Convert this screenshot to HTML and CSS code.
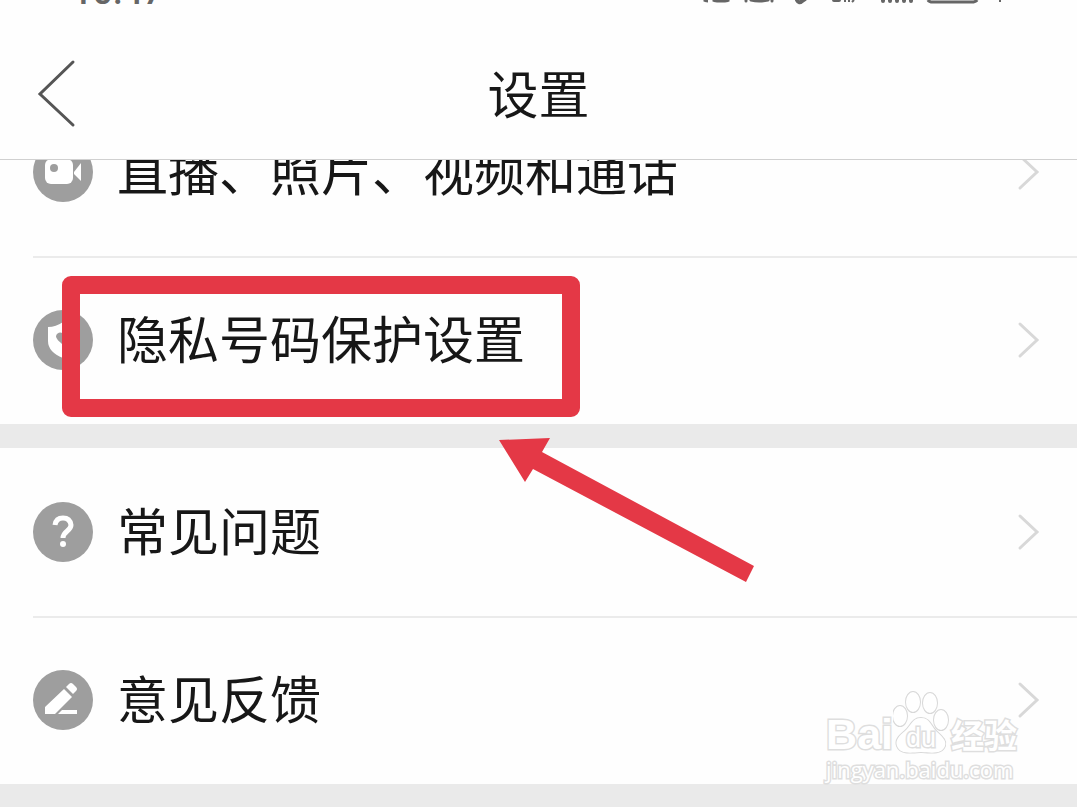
FILE: index.html
```html
<!DOCTYPE html>
<html lang="zh-CN">
<head>
    <meta charset="UTF-8">
    <meta name="viewport" content="width=device-width, initial-scale=1.0">
    <title>设置</title>
    <link rel="stylesheet" href="styles.css">
</head>
<body>
    <header class="top">
        <div class="status-bar">
            <span class="time">10:47</span>
            <svg class="status-icons" width="310" height="6" viewBox="0 0 310 6" fill="none" stroke="#666" stroke-width="3" aria-hidden="true">
                <path d="M4 0q1 1 4 1M13 0q1 1 4 1h8q3 0 4-1" />
                <path d="M46 0v1M51 0q8 2 17 0M72 0v1" stroke-linecap="round" />
                <path d="M97 0q2 4 5 1l3-2M134 0h5" stroke-width="4" stroke-linecap="round" />
                <path d="M145 0v2M149 0v2M154 0l-2 2" stroke-width="2" />
                <path d="M183 0v1M190 0v1M197 0v1M204 0v1M211 0v1" stroke-width="4" stroke-linecap="round" />
                <path d="M228 0q1 2 5 2h38q5 0 6-2" />
                <path d="M300 0v2" stroke-width="2" />
            </svg>
        </div>
        <div class="nav">
            <a href="#" class="back" aria-label="返回">
                <svg width="40" height="70" viewBox="0 0 40 70" fill="none" stroke="#555" stroke-width="3" stroke-linecap="round">
                    <path d="M36 4L3 36l33 31" />
                </svg>
            </a>
            <h1>设置</h1>
        </div>
    </header>

    <main class="settings">
        <div class="group scrolled">
            <a href="#" class="row">
                <svg class="icon" viewBox="0 0 60 60">
                    <circle cx="30" cy="30" r="30" fill="#9e9e9e" />
                    <rect x="12" y="17" width="28" height="25" rx="6" fill="#fff" />
                    <path d="M41 30l7-9v18l-7-7z" fill="#fff" />
                    <circle cx="21" cy="26" r="4" fill="#9e9e9e" />
                </svg>
                <span class="label">直播、照片、视频和通话</span>
                <svg class="arrow" viewBox="0 0 24 38"><path d="M3 3l17 16L3 35" /></svg>
            </a>
            <a href="#" class="row">
                <svg class="icon" viewBox="0 0 60 60">
                    <circle cx="30" cy="30" r="30" fill="#9e9e9e" />
                    <path d="M30 12q7 5 15 5v14q0 11-15 17-15-6-15-17V17q8 0 15-5z" fill="#fff" />
                    <path d="M30 35c-4-4-7-6-7-9a4 4 0 0 1 7-2 4 4 0 0 1 7 2c0 3-3 5-7 9z" fill="#9e9e9e" />
                </svg>
                <span class="label">隐私号码保护设置</span>
                <svg class="arrow" viewBox="0 0 24 38"><path d="M3 3l17 16L3 35" /></svg>
            </a>
        </div>
        <div class="group">
            <a href="#" class="row">
                <svg class="icon" viewBox="0 0 60 60">
                    <circle cx="30" cy="30" r="30" fill="#9e9e9e" />
                    <path d="M22 23q1-7 8-7t8 7c0 6-8 6-8 13" fill="none" stroke="#fff" stroke-width="5" />
                    <circle cx="30" cy="42" r="3" fill="#fff" />
                </svg>
                <span class="label">常见问题</span>
                <svg class="arrow" viewBox="0 0 24 38"><path d="M3 3l17 16L3 35" /></svg>
            </a>
            <a href="#" class="row">
                <svg class="icon" viewBox="0 0 60 60">
                    <circle cx="30" cy="30" r="30" fill="#9e9e9e" />
                    <path d="M31 19l8 8-17 17H12v-7zM29 40h15v4H25z" fill="#fff" />
                    <path d="M36 14q2-2 4 0l3 3q2 2 0 4l-3 3-7-7z" fill="#fff" />
                </svg>
                <span class="label">意见反馈</span>
                <svg class="arrow" viewBox="0 0 24 38"><path d="M3 3l17 16L3 35" /></svg>
            </a>
        </div>
    </main>

    <!-- highlight over the privacy row -->
    <div class="highlight"></div>
    <svg class="pointer" width="256" height="146" viewBox="0 0 256 146">
        <path d="M1 3l51-2-8 14 212 114-8 16L35 32l-8 13z" fill="#e43846" />
    </svg>

    <div class="watermark">
        <div class="brand">
            <span class="bai">Bai</span>
            <span class="paw">
                <svg width="58" height="66" viewBox="0 0 58 66" fill="#fff" stroke="#d8d8d8" stroke-width="2">
                    <ellipse cx="7" cy="26" rx="7" ry="10" />
                    <ellipse cx="20" cy="12" rx="7" ry="10" />
                    <ellipse cx="37" cy="13" rx="7" ry="10" />
                    <ellipse cx="48" cy="30" rx="7" ry="10" />
                    <path d="M28 28c-9 0-10 8-16 13S2 50 4 56c3 8 12 7 24 6 12 1 21 2 24-6 2-6-4-10-9-15S37 28 28 28z" />
                </svg>
                <span class="du">du</span>
            </span>
            <span class="jingyan">经验</span>
        </div>
        <div class="site">jingyan.baidu.com</div>
    </div>
</body>
</html>
```

FILE: styles.css
```css
* {
    box-sizing: border-box;
}
body {
    position: relative;
    margin: 0;
    min-height: 100vh;
    overflow: hidden;
    background-color: #eaeaea;
    color: #171717;
    font-family: "Noto Sans CJK SC", sans-serif;
}
.top {
    position: relative;
    z-index: 1;
    background-color: #fefefe;
    border-bottom: 1px solid #d0d0d0;
}
.status-bar {
    display: flex;
    justify-content: space-between;
    align-items: flex-end;
    height: 6px;
    padding: 0 67px 0 72px;
    overflow: hidden;
}
.time {
    color: #666;
    font-family: Roboto, sans-serif;
    font-size: 36px;
    font-weight: 500;
    line-height: 28px;
}
.status-icons {
    flex: none;
}
.nav {
    display: grid;
    grid-template-columns: 1fr auto 1fr;
    align-items: center;
    height: 153px;
    padding: 0 37px 20px;
}
.back {
    display: flex;
    padding-top: 40px;
}
h1 {
    margin: 0;
    padding-top: 38px;
    font-size: 51px;
    font-weight: 400;
    line-height: 60px;
}
.group {
    margin-bottom: 24px;
    background-color: #fefefe;
}
/* first row is partly under the header */
.scrolled {
    margin-top: -72px;
}
.row {
    position: relative;
    display: flex;
    align-items: center;
    gap: 24px;
    height: 168px;
    padding: 0 36px 0 33px;
    color: inherit;
    text-decoration: none;
}
.row + .row::before {
    content: "";
    position: absolute;
    top: 0;
    left: 33px;
    right: 0;
    height: 2px;
    background-color: #ebebeb;
}
.icon {
    flex: none;
    width: 60px;
    height: 60px;
}
.label {
    flex: 1;
    padding-bottom: 6px;
    font-size: 51px;
    line-height: 60px;
}
.arrow {
    flex: none;
    width: 24px;
    height: 38px;
    fill: none;
    stroke: #d8d8d8;
    stroke-width: 3;
    stroke-linecap: round;
}
.highlight {
    position: absolute;
    z-index: 2;
    top: 276px;
    left: 62px;
    width: 518px;
    height: 141px;
    border: 18px solid #e43846;
    border-radius: 9px;
}
.pointer {
    position: absolute;
    z-index: 2;
    top: 437px;
    left: 498px;
}
.watermark {
    position: absolute;
    top: 690px;
    right: 60px;
    color: #fff;
    paint-order: stroke fill;
    -webkit-text-stroke: 3px #dedede;
}
.brand {
    display: flex;
    align-items: flex-end;
    height: 66px;
}
.bai {
    padding-bottom: 2px;
    font-family: "Liberation Sans", sans-serif;
    font-size: 43px;
    font-weight: 700;
    line-height: 40px;
}
.paw {
    position: relative;
    width: 58px;
    height: 66px;
}
.du {
    position: absolute;
    top: 34px;
    left: 13px;
    font-family: "Liberation Sans", sans-serif;
    font-size: 27px;
    line-height: 28px;
}
.jingyan {
    padding-bottom: 5px;
    font-size: 33px;
    font-weight: 700;
    line-height: 34px;
}
.site {
    font-family: "Open Sans", sans-serif;
    font-size: 22px;
    line-height: 26px;
}
```
